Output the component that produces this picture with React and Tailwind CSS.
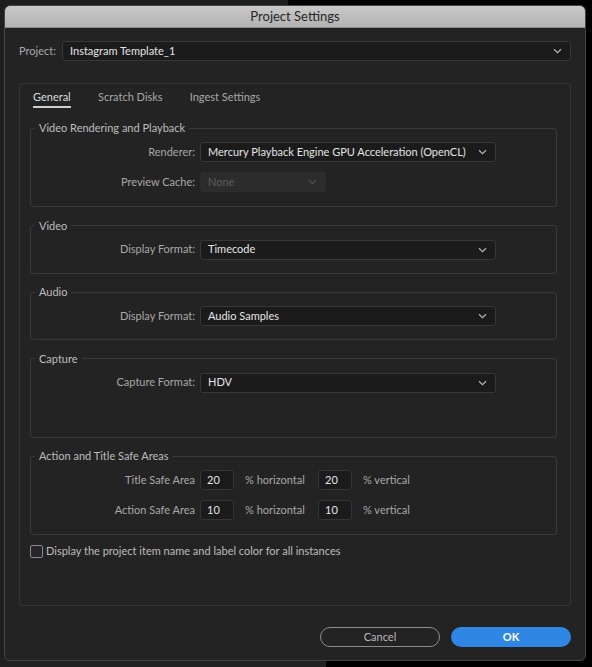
import React from 'react';

const font = { fontFamily: 'Lato, "Open Sans", sans-serif' };

function Chevron({ className = 'text-[#b5b5b5]' }) {
  return (
    <svg width="9" height="6" viewBox="0 0 9 6" className={className}>
      <path d="M1 1.2 L4.5 4.6 L8 1.2" fill="none" stroke="currentColor" strokeWidth="1.2" />
    </svg>
  );
}

function Select({ value, width = 'w-[296px]', disabled }) {
  return (
    <div
      className={`${width} h-[20px] flex items-center justify-between pl-[7px] pr-[8px] rounded-[3px] ${
        disabled
          ? 'bg-[#2c2c2c] border border-[#2c2c2c] text-[#5e5e5e]'
          : 'bg-[#1b1b1b] border border-[#383838] text-[#e4e4e4]'
      }`}
    >
      <span>{value}</span>
      <Chevron className={disabled ? 'text-[#4e4e4e]' : 'text-[#b5b5b5]'} />
    </div>
  );
}

function Row({ label, children }) {
  return (
    <div className="flex items-center">
      <div className="w-[169px] pr-[5px] text-right text-[#a8a8a8]">{label}</div>
      {children}
    </div>
  );
}

function Group({ title, children, pb = 'pb-[13px]' }) {
  return (
    <fieldset className={`border border-[#393939] rounded-[3px] ${pb}`}>
      <legend className="ml-[4px] px-[4px] leading-[14px] text-[#bdbdbd]">{title}</legend>
      <div className="pt-[7px] flex flex-col gap-[10px]">{children}</div>
    </fieldset>
  );
}

function NumBox({ value }) {
  return (
    <div className="w-[34px] h-[20px] flex items-center pl-[6px] rounded-[3px] bg-[#1b1b1b] border border-[#353535] text-[#e4e4e4]">
      {value}
    </div>
  );
}

function SafeRow({ label, h, v }) {
  return (
    <Row label={label}>
      <NumBox value={h} />
      <span className="ml-[11px] w-[73px] text-[#a8a8a8]">% horizontal</span>
      <NumBox value={v} />
      <span className="ml-[11px] text-[#a8a8a8]">% vertical</span>
    </Row>
  );
}

export default function App() {
  return (
    <div className="relative w-[592px] h-[667px] bg-black overflow-hidden text-[11px]" style={font}>
      {/* backdrop */}
      <div className="absolute left-0 top-0 w-[288px] h-[30px] bg-[#1e1e1e]" />
      <div className="absolute left-0 top-0 w-[10px] h-[667px] bg-[#1e1e1e]" />
      <div className="absolute left-0 bottom-0 w-[326px] h-[10px] bg-[#222222]" />

      <div className="relative ml-[4px] mt-[5px] w-[582px] h-[656px] rounded-[6px] overflow-hidden bg-[#232323] border border-[#454545] flex flex-col">
        <div className="h-[22px] shrink-0 flex items-center justify-center bg-gradient-to-b from-[#c9c9c9] to-[#b2b2b2] border-b border-[#8a8a8a] text-[13px] text-[#262626]">
          Project Settings
        </div>

        <div className="flex-1 px-[14px] pt-[13px] flex flex-col">
          <div className="flex items-center">
            <span className="w-[43px] text-[#a8a8a8]">Project:</span>
            <div className="flex-1 h-[20px] flex items-center justify-between pl-[7px] pr-[8px] rounded-[3px] bg-[#1b1b1b] border border-[#383838] text-[#e4e4e4]">
              <span>Instagram Template_1</span>
              <Chevron />
            </div>
          </div>

          <div className="mt-[22px] h-[523px] border border-[#353535] rounded-[3px] pl-[10px] pr-[13px] flex flex-col">
            <div className="flex pt-[6px] pl-[3px] gap-[27px] leading-[14px]">
              <div className="flex flex-col items-start">
                <span className="text-[#dcdcdc]">General</span>
                <div className="mt-[2px] h-[2px] w-[38px] bg-[#cfcfcf]" />
              </div>
              <span className="text-[#a8a8a8]">Scratch Disks</span>
              <span className="text-[#a8a8a8]">Ingest Settings</span>
            </div>

            <div className="mt-[13px] flex flex-col gap-[11.5px]">
              <Group title="Video Rendering and Playback" pb="pb-[14px]">
                <Row label="Renderer:">
                  <Select value="Mercury Playback Engine GPU Acceleration (OpenCL)" />
                </Row>
                <Row label="Preview Cache:">
                  <Select value="None" width="w-[126px]" disabled />
                </Row>
              </Group>

              <Group title="Video">
                <Row label="Display Format:">
                  <Select value="Timecode" />
                </Row>
              </Group>

              <Group title="Audio">
                <Row label="Display Format:">
                  <Select value="Audio Samples" />
                </Row>
              </Group>

              <Group title="Capture" pb="pb-[44px]">
                <Row label="Capture Format:">
                  <Select value="HDV" />
                </Row>
              </Group>

              <Group title="Action and Title Safe Areas" pb="pb-[14px]">
                <SafeRow label="Title Safe Area" h="20" v="20" />
                <SafeRow label="Action Safe Area" h="10" v="10" />
              </Group>
            </div>

            <div className="mt-[8px] flex items-center gap-[3px]">
              <div className="w-[13px] h-[13px] rounded-[2px] border border-[#8a8a8a] bg-[#262626]" />
              <span className="text-[#bdbdbd]">Display the project item name and label color for all instances</span>
            </div>
          </div>

          <div className="mt-[21px] flex justify-end gap-[11px]">
            <button className="w-[120px] h-[20px] rounded-full border-[1.5px] border-[#8c8c8c] text-[#b8b8b8] flex items-center justify-center">
              Cancel
            </button>
            <button className="w-[120px] h-[20px] rounded-full bg-[#2f86e4] text-white font-bold flex items-center justify-center">
              OK
            </button>
          </div>
        </div>
      </div>
    </div>
  );
}
